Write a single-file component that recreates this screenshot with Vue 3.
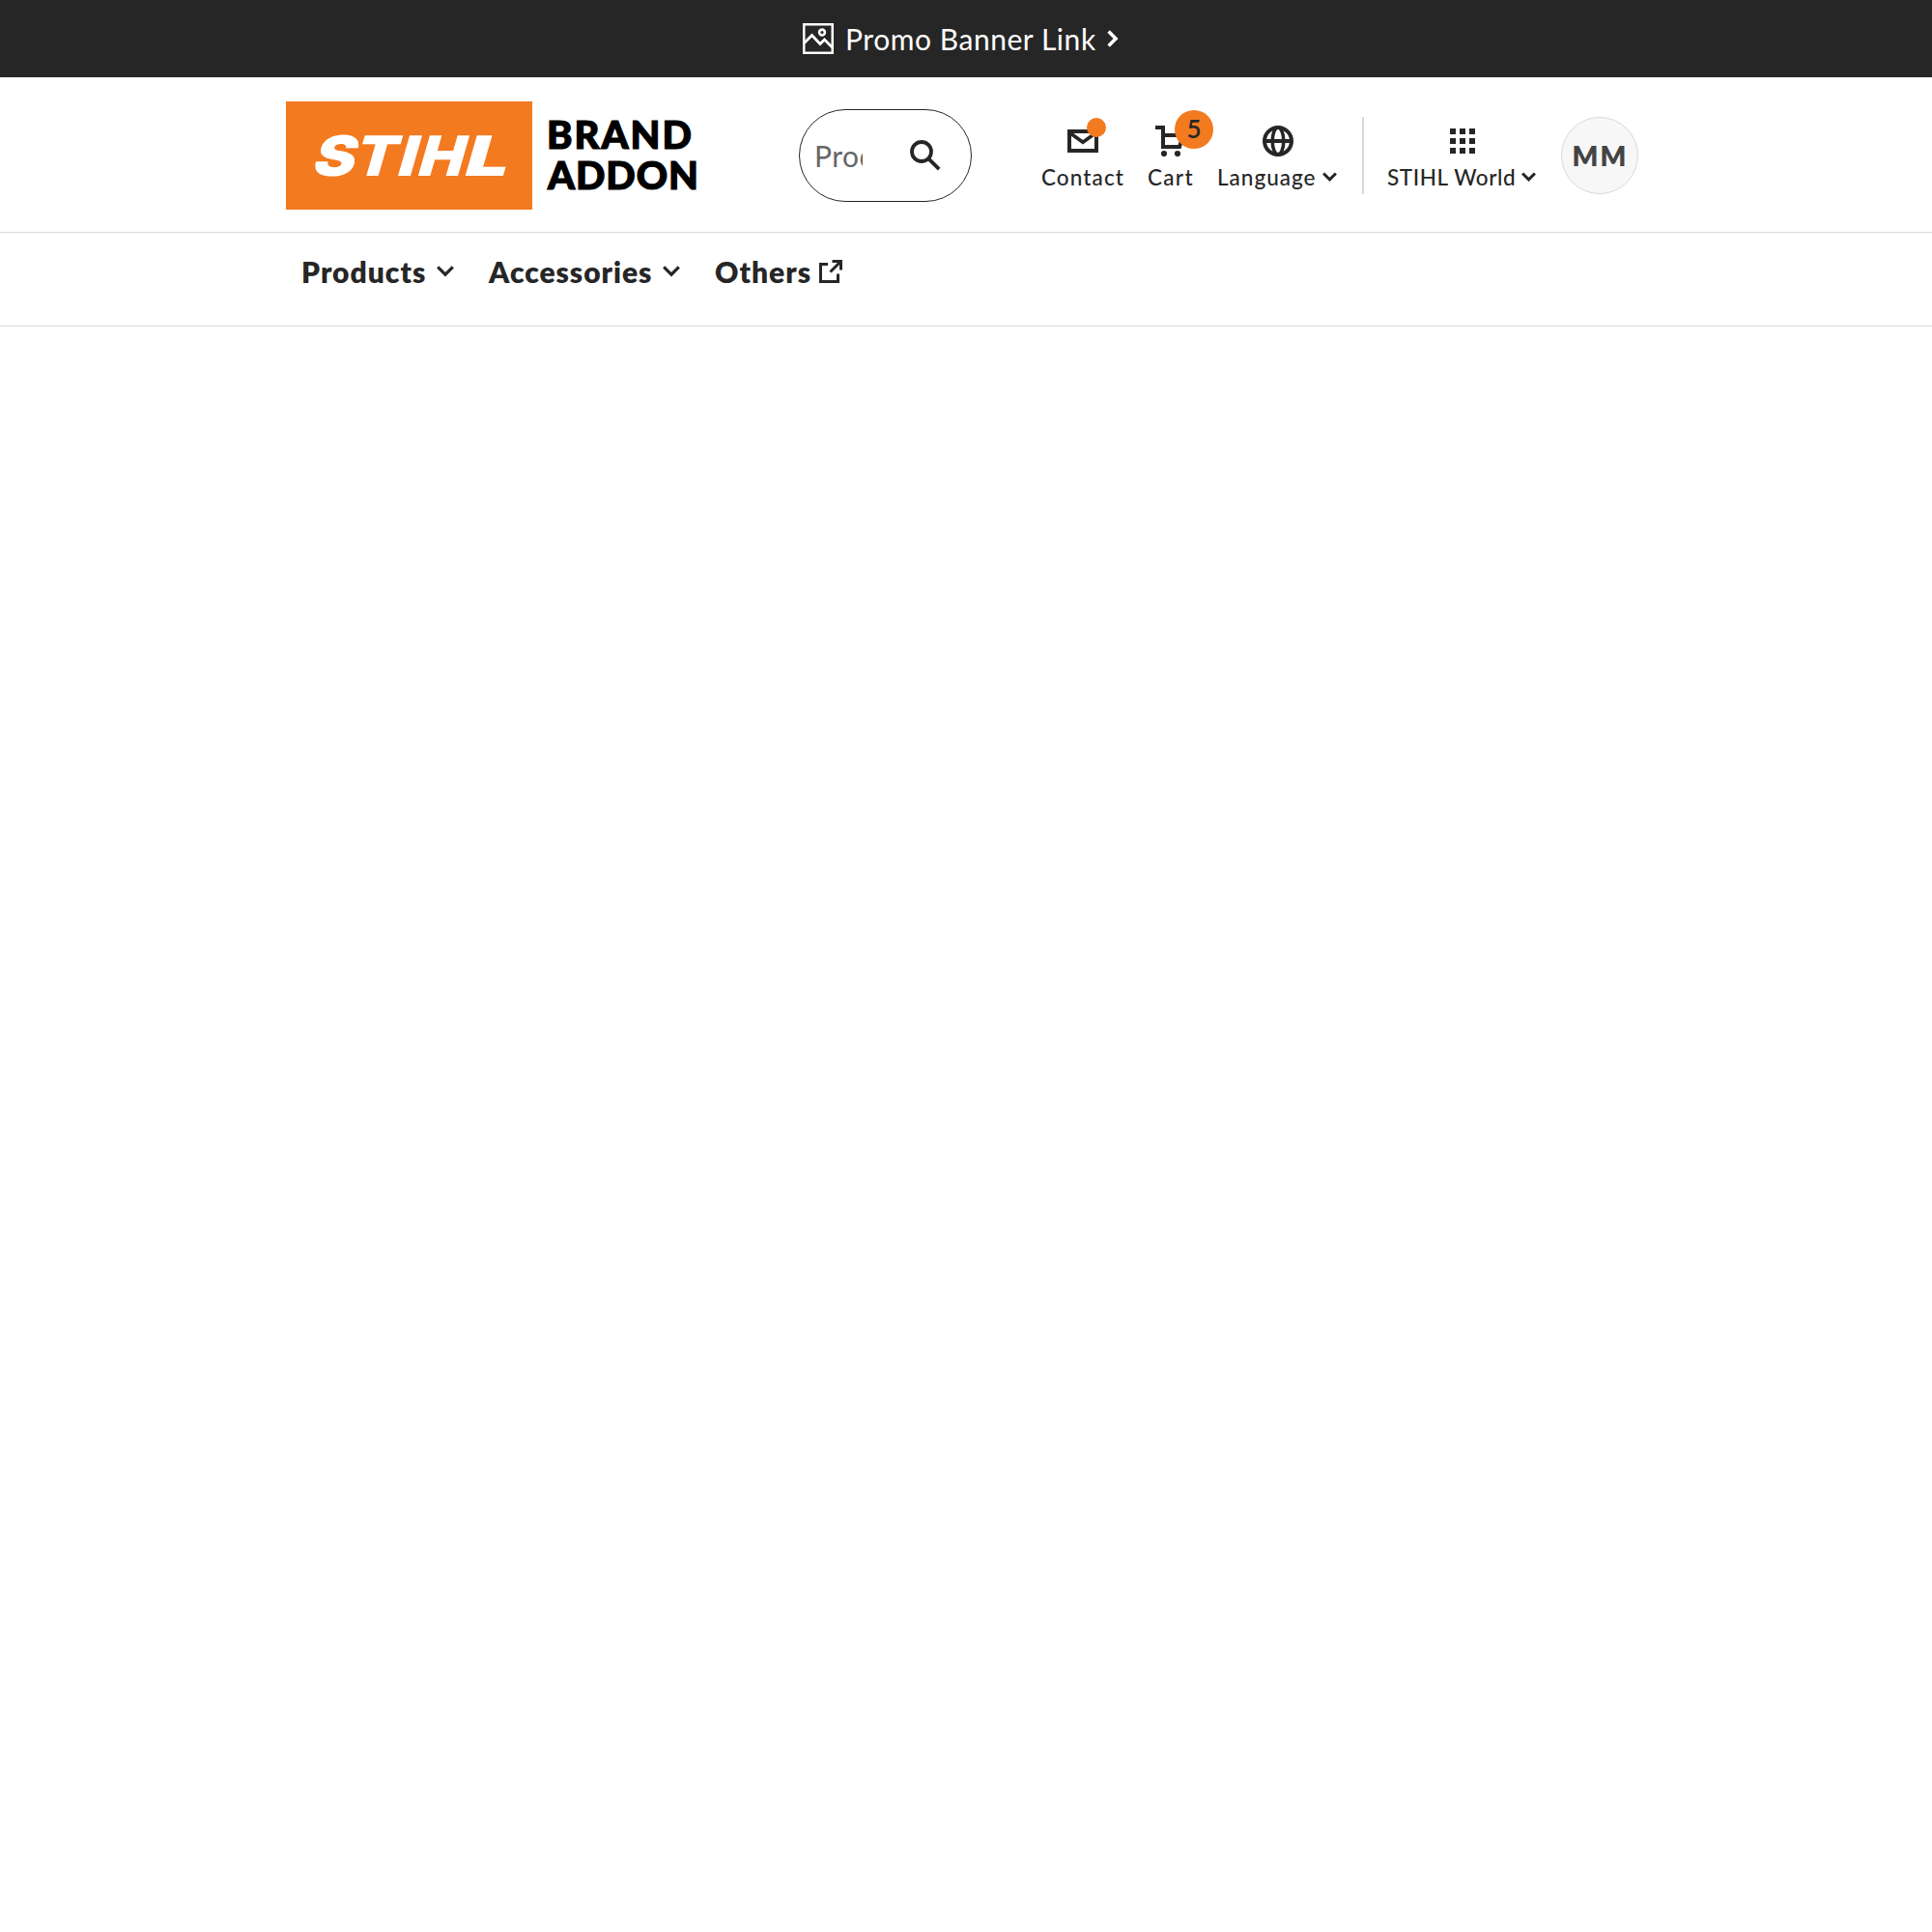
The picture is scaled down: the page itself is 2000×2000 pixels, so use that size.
<script setup>
const nav = [
  { label: 'Products', cls: 'products' },
  { label: 'Accessories', cls: 'accessories' },
]
</script>

<template>
  <div class="page">
    <a class="promo">
      <svg class="picture" width="32" height="32" viewBox="0 0 32 32" fill="none" stroke="#fff">
        <rect x="1.25" y="1.25" width="29.5" height="29.5" stroke-width="2.5" />
        <path d="M1.5 20.5 9.5 12.5 18 21.5 22.5 17 30.5 25" stroke-width="2.8" />
        <circle cx="20" cy="9.5" r="2.9" stroke-width="2.6" />
      </svg>
      <span class="promo-text">Promo Banner Link</span>
      <svg class="promo-arrow" width="12" height="18" viewBox="0 0 12 18" fill="none" stroke="#fff" stroke-width="3.6">
        <path d="M1.6 1.6 9 9 1.6 16.4" />
      </svg>
    </a>

    <header class="header">
      <svg class="logo" width="255" height="112" viewBox="0 0 255 112">
        <rect width="255" height="112" fill="#f37a1f" />
        <g class="wordmark" transform="translate(0 77) skewX(-16)">
          <text x="25" textLength="44" lengthAdjust="spacingAndGlyphs">S</text>
          <text x="68" textLength="43" lengthAdjust="spacingAndGlyphs">T</text>
          <text x="113" textLength="19" lengthAdjust="spacingAndGlyphs">I</text>
          <text x="134" textLength="47" lengthAdjust="spacingAndGlyphs">H</text>
          <text x="182" textLength="45" lengthAdjust="spacingAndGlyphs">L</text>
        </g>
      </svg>
      <div class="brand">
        <div class="brand-first">BRAND</div>
        <div class="brand-second">ADDON</div>
      </div>

      <div class="search">
        <span class="placeholder">Products</span>
        <svg width="32" height="32" viewBox="0 0 32 32" fill="none" stroke="#262626" stroke-width="3.8">
          <circle cx="12" cy="12" r="10" />
          <path d="M18.8 18.8 30.2 30.2" />
        </svg>
      </div>

      <a class="action contact">
        <svg width="32" height="32" viewBox="0 0 32 32" fill="none" stroke="#262626" stroke-width="4">
          <rect x="2" y="6" width="28" height="20" />
          <path d="M2.5 7.5 16 17.3 29.5 7.5" stroke-width="3.6" />
        </svg>
        <span class="dot"></span>
        <span class="label">Contact</span>
      </a>
      <a class="action cart">
        <svg width="32" height="32" viewBox="0 0 32 32" fill="none" stroke="#262626" stroke-width="4">
          <path d="M0 2H8V22H25L29 10H8" />
          <circle cx="9" cy="29" r="3.1" fill="#262626" stroke="none" />
          <circle cx="23" cy="29" r="3.1" fill="#262626" stroke="none" />
        </svg>
        <span class="badge">5</span>
        <span class="label">Cart</span>
      </a>
      <a class="action language">
        <svg width="32" height="32" viewBox="0 0 32 32" fill="none" stroke="#262626" stroke-width="4">
          <circle cx="16" cy="16" r="14" />
          <ellipse cx="16" cy="16" rx="5.8" ry="14" stroke-width="3.6" />
          <path d="M2 16H30" />
        </svg>
        <span class="label">Language
          <svg class="chev" width="15" height="10" viewBox="0 0 15 10" fill="none" stroke="#262626" stroke-width="3"><path d="M1.1 1.5 7.5 7.9 13.9 1.5" /></svg>
        </span>
      </a>
      <div class="divider"></div>
      <a class="action world">
        <svg width="32" height="32" viewBox="0 0 32 32" fill="#262626">
          <path d="M3 3h6v6H3zM13 3h6v6h-6zM23 3h6v6h-6zM3 13h6v6H3zM13 13h6v6h-6zM23 13h6v6h-6zM3 23h6v6H3zM13 23h6v6h-6zM23 23h6v6h-6z" />
        </svg>
        <span class="label">STIHL World
          <svg class="chev" width="15" height="10" viewBox="0 0 15 10" fill="none" stroke="#262626" stroke-width="3"><path d="M1.1 1.5 7.5 7.9 13.9 1.5" /></svg>
        </span>
      </a>
      <div class="avatar">MM</div>
    </header>

    <nav class="nav">
      <a v-for="item in nav" :key="item.label" :class="['nav-item', item.cls]">
        <span>{{ item.label }}</span>
        <svg width="18" height="12" viewBox="0 0 18 12" fill="none" stroke="#262626" stroke-width="3.1"><path d="M1.2 1.4 9 9.2 16.8 1.4" /></svg>
      </a>
      <a class="nav-item others">
        <span>Others</span>
        <svg width="24" height="24" viewBox="0 0 24 24" fill="none" stroke="#262626" stroke-width="3">
          <path d="M9 4.5H1.5V22.5H19.5V14.5" />
          <path d="M13.5 1.5H22.5V10.5M22 2 11.5 12.5" />
        </svg>
      </a>
    </nav>
  </div>
</template>

<style scoped>
.page {
  min-height: 2000px;
  background: #fff;
  color: #262626;
  font-family: Lato, "Liberation Sans", sans-serif;
  white-space: nowrap;
}
svg { display: block; flex: none; }
.promo {
  display: flex;
  align-items: center;
  height: 80px;
  box-sizing: border-box;
  padding-left: 831px;
  background: #262626;
  color: #fff;
  font-size: 30px;
  letter-spacing: 0.55px;
}
.promo-text { width: 270px; margin-left: 12px; line-height: 79px; }
.promo-arrow { margin-left: 1px; }
.header {
  display: flex;
  align-items: flex-start;
  height: 161px;
  box-sizing: border-box;
  padding-left: 296px;
  border-bottom: 1px solid #d9d9d9;
}
.logo { margin-top: 25px; }
.wordmark {
  fill: #fff;
  font-family: Inter, sans-serif;
  font-weight: 900;
  font-size: 57.5px;
}
.brand {
  width: 261px;
  margin: 38px 0 0 15px;
  color: #000;
  font-size: 40px;
  font-weight: 900;
  line-height: 42px;
  -webkit-text-stroke: 1.2px #000;
}
.brand-first { letter-spacing: 2px; }
.brand-second { padding-left: 1px; letter-spacing: 0.9px; }
.search {
  display: flex;
  align-items: center;
  width: 179px;
  height: 96px;
  box-sizing: border-box;
  margin: 33px 72px 0 0;
  padding-left: 15px;
  border: 1px solid #262626;
  border-radius: 48px;
}
.placeholder {
  width: 50px;
  margin-right: 49px;
  overflow: hidden;
  color: #666;
  font-size: 30px;
  line-height: 92px;
  letter-spacing: 0.5px;
}
.search svg { margin-top: -1px; }
.action {
  position: relative;
  display: flex;
  flex-direction: column;
  align-items: center;
  margin-top: 50px;
  font-size: 22.5px;
  font-weight: 500;
}
.label {
  display: flex;
  align-items: center;
  justify-content: space-between;
  width: 100%;
  margin-top: 9px;
  line-height: 26px;
  letter-spacing: 1.1px;
}
.chev { margin: -2px 1px 0 0; }
.contact { width: 86px; margin-right: 24px; }
.cart { width: 48px; margin-right: 24px; }
.cart .label { letter-spacing: 1.3px; }
.language { width: 125px; }
.language svg:first-child { margin-left: 1px; }
.language .label { letter-spacing: 1px; }
.world { width: 155px; }
.world .label { letter-spacing: 0.6px; }
.dot {
  position: absolute;
  top: -8px;
  left: 47px;
  width: 20px;
  height: 20px;
  border-radius: 50%;
  background: #f37a1f;
}
.badge {
  position: absolute;
  top: -16px;
  left: 28px;
  width: 40px;
  height: 40px;
  border-radius: 50%;
  background: #f37a1f;
  font-size: 26px;
  font-weight: 600;
  line-height: 38px;
  text-align: center;
}
.divider { width: 2px; height: 80px; margin: 41px 24px 0 25px; background: #d9d9d9; }
.avatar {
  width: 80px;
  height: 80px;
  box-sizing: border-box;
  margin: 41px 0 0 25px;
  padding-left: 1px;
  border: 1px solid #d9d9d9;
  border-radius: 50%;
  background: #f7f7f7;
  color: #444;
  font-size: 28px;
  font-weight: 800;
  line-height: 79px;
  letter-spacing: 2px;
  text-align: center;
}
.nav {
  display: flex;
  height: 97px;
  box-sizing: border-box;
  padding-left: 312px;
  border-bottom: 1px solid #d9d9d9;
  font-size: 30px;
  font-weight: 800;
}
.nav-item {
  display: flex;
  align-items: center;
  justify-content: space-between;
  height: 79px;
  letter-spacing: 1px;
}
.nav-item span { line-height: 36px; }
.products { width: 158px; margin-right: 36px; }
.accessories { width: 198px; margin-right: 36px; letter-spacing: 0.95px; }
.others { width: 132px; }
</style>
